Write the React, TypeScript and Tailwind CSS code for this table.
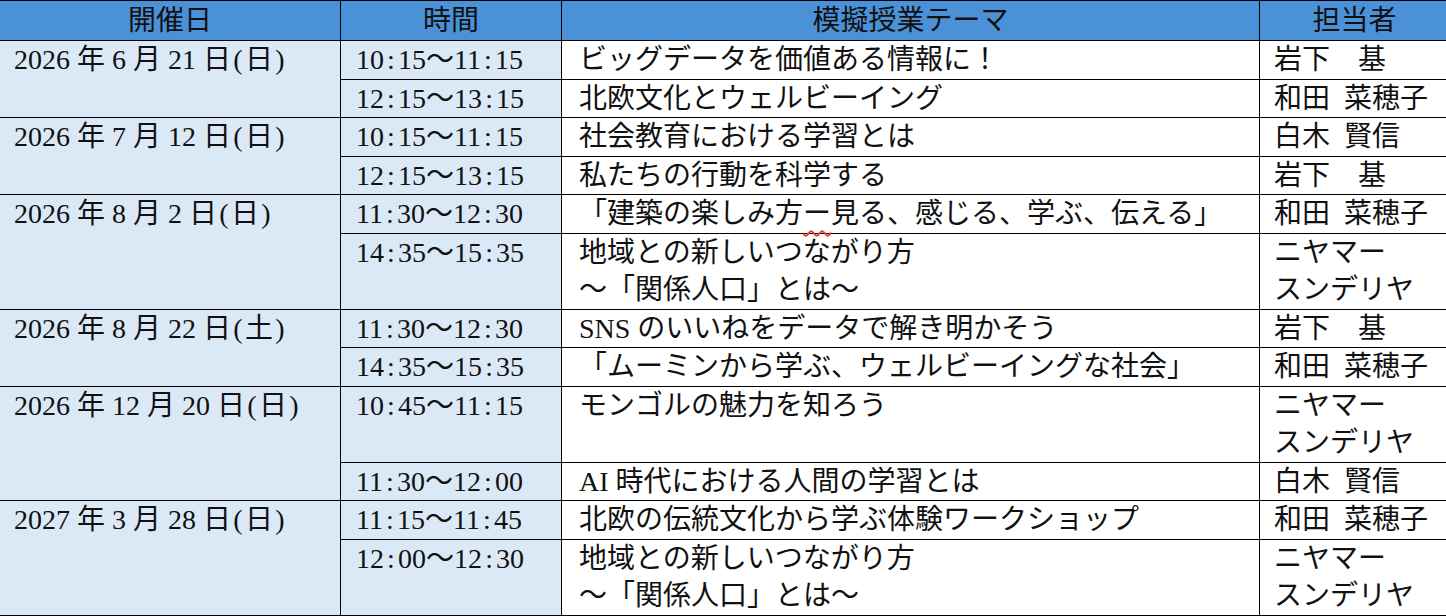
import React from 'react';

type Lesson = { time: string; theme: string[]; teacher: string[] };
type Day = { date: string; lessons: Lesson[] };

const schedule: Day[] = [
  {
    date: '2026 年 6 月 21 日(日)',
    lessons: [
      { time: '10:15～11:15', theme: ['ビッグデータを価値ある情報に！'], teacher: ['岩下　基'] },
      { time: '12:15～13:15', theme: ['北欧文化とウェルビーイング'], teacher: ['和田 菜穂子'] },
    ],
  },
  {
    date: '2026 年 7 月 12 日(日)',
    lessons: [
      { time: '10:15～11:15', theme: ['社会教育における学習とは'], teacher: ['白木 賢信'] },
      { time: '12:15～13:15', theme: ['私たちの行動を科学する'], teacher: ['岩下　基'] },
    ],
  },
  {
    date: '2026 年 8 月 2 日(日)',
    lessons: [
      { time: '11:30～12:30', theme: ['「建築の楽しみ方ー見る、感じる、学ぶ、伝える」'], teacher: ['和田 菜穂子'] },
      { time: '14:35～15:35', theme: ['地域との新しいつながり方', '～「関係人口」とは～'], teacher: ['ニヤマー', 'スンデリヤ'] },
    ],
  },
  {
    date: '2026 年 8 月 22 日(土)',
    lessons: [
      { time: '11:30～12:30', theme: ['SNS のいいねをデータで解き明かそう'], teacher: ['岩下　基'] },
      { time: '14:35～15:35', theme: ['「ムーミンから学ぶ、ウェルビーイングな社会」'], teacher: ['和田 菜穂子'] },
    ],
  },
  {
    date: '2026 年 12 月 20 日(日)',
    lessons: [
      { time: '10:45～11:15', theme: ['モンゴルの魅力を知ろう'], teacher: ['ニヤマー', 'スンデリヤ'] },
      { time: '11:30～12:00', theme: ['AI 時代における人間の学習とは'], teacher: ['白木 賢信'] },
    ],
  },
  {
    date: '2027 年 3 月 28 日(日)',
    lessons: [
      { time: '11:15～11:45', theme: ['北欧の伝統文化から学ぶ体験ワークショップ'], teacher: ['和田 菜穂子'] },
      { time: '12:00～12:30', theme: ['地域との新しいつながり方', '～「関係人口」とは～'], teacher: ['ニヤマー', 'スンデリヤ'] },
    ],
  },
];

// Mincho half-width punctuation: colon, parens and spaces take half an em
const half = new Set([':', '(', ')', ' ']);

function HalfWidth({ value }: { value: string }) {
  const out: React.ReactNode[] = [];
  let buf = '';
  value.split('').forEach((ch, i) => {
    if (half.has(ch)) {
      if (buf) out.push(buf);
      buf = '';
      out.push(
        <span key={i} className="inline-block w-[14px] text-center">
          {ch === ' ' ? '\u00a0' : ch}
        </span>
      );
    } else {
      buf += ch;
    }
  });
  if (buf) out.push(buf);
  return <>{out}</>;
}

// the spell-check squiggle under the long dash
function Theme({ text }: { text: string }) {
  const idx = text.indexOf('方ー');
  if (idx < 0) return <>{text}</>;
  return (
    <>
      {text.slice(0, idx + 1)}
      <span className="underline decoration-wavy decoration-[#e53935] decoration-[1.5px] underline-offset-[7px]">ー</span>
      {text.slice(idx + 2)}
    </>
  );
}

const cell = 'border border-black align-top leading-[37.5px] p-0';

export default function App() {
  return (
    <div
      className="w-[1446px] h-[616px] overflow-hidden bg-white text-[28px] text-[#111]"
      style={{ fontFamily: '"Liberation Serif", "Noto Sans CJK JP", serif' }}
    >
      <table className="border-collapse table-fixed ml-[-1px] w-[1450px] whitespace-nowrap">
        <colgroup>
          <col className="w-[341px]" />
          <col className="w-[221px]" />
          <col className="w-[698px]" />
          <col className="w-[190px]" />
        </colgroup>
        <thead>
          <tr className="bg-[#4b91d8] h-[40px]">
            <th className="border border-black font-normal text-center leading-[38px] p-0">開催日</th>
            <th className="border border-black font-normal text-center leading-[38px] p-0">時間</th>
            <th className="border border-black font-normal text-center leading-[38px] p-0">模擬授業テーマ</th>
            <th className="border border-black font-normal text-center leading-[38px] p-0">担当者</th>
          </tr>
        </thead>
        <tbody>
          {schedule.map((day) =>
            day.lessons.map((l, i) => (
              <tr key={day.date + i}>
                {i === 0 && (
                  <td rowSpan={day.lessons.length} className={`${cell} bg-[#dbe9f7] pl-[14px]`}>
                    {day.date.replace(/\(.\)$/, '')}
                    <HalfWidth value={day.date.slice(-3)} />
                  </td>
                )}
                <td className={`${cell} bg-[#dbe9f7] pl-[15px]`}>
                  <HalfWidth value={l.time} />
                </td>
                <td className={`${cell} pl-[17px]`}>
                  {l.theme.map((t) => (
                    <div key={t}>
                      <Theme text={t} />
                    </div>
                  ))}
                </td>
                <td className={`${cell} pl-[14px]`}>
                  {l.teacher.map((t) => (
                    <div key={t}>
                      <HalfWidth value={t} />
                    </div>
                  ))}
                </td>
              </tr>
            ))
          )}
        </tbody>
      </table>
    </div>
  );
}
